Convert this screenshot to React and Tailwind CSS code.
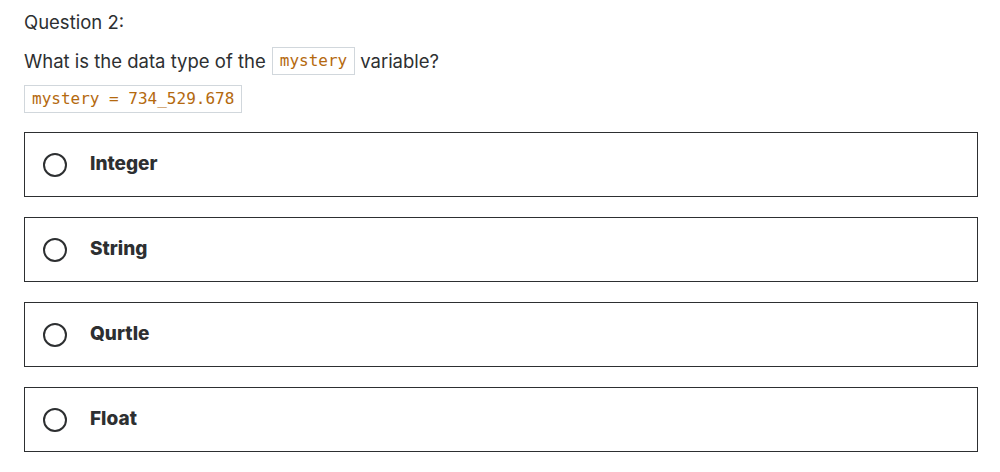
import React, { useState } from "react";

const options = ["Integer", "String", "Qurtle", "Float"];

const App = () => {
  const [selected, setSelected] = useState(null);

  return (
    <div className="w-[1000px] h-[472px] bg-white px-6 pt-[10px] text-[#2d2f31] font-['Inter',sans-serif]">
      <p className="text-[18.5px] leading-[24px]">Question 2:</p>
      <p className="mt-[13px] text-[18.5px] leading-[28px] flex items-center">
        What is the data type of the
        <code className="ml-[6px] mr-[5px] px-[7px] border border-[#d1d7dc] text-[#b4690e] text-[16px] leading-[26px] font-['DejaVu_Sans_Mono',monospace]">
          mystery
        </code>
        variable?
      </p>
      <pre className="mt-[10px] inline-block px-[7px] border border-[#d1d7dc] text-[#b4690e] text-[16px] leading-[26px] font-['DejaVu_Sans_Mono',monospace]">
        mystery = 734_529.678
      </pre>
      <div className="mt-[19px] flex flex-col gap-[20px] w-[954px]">
        {options.map((opt, i) => (
          <label
            key={opt}
            onClick={() => setSelected(i)}
            className="h-[65px] border border-[#2d2f31] flex items-center px-[18px] gap-[23px] cursor-pointer"
          >
            <span className="w-[24px] h-[24px] rounded-full border-2 border-[#2d2f31] flex items-center justify-center">
              {selected === i && <span className="w-[12px] h-[12px] rounded-full bg-[#2d2f31]" />}
            </span>
            <span className="text-[19px] font-extrabold">{opt}</span>
          </label>
        ))}
      </div>
    </div>
  );
};

export default App;
